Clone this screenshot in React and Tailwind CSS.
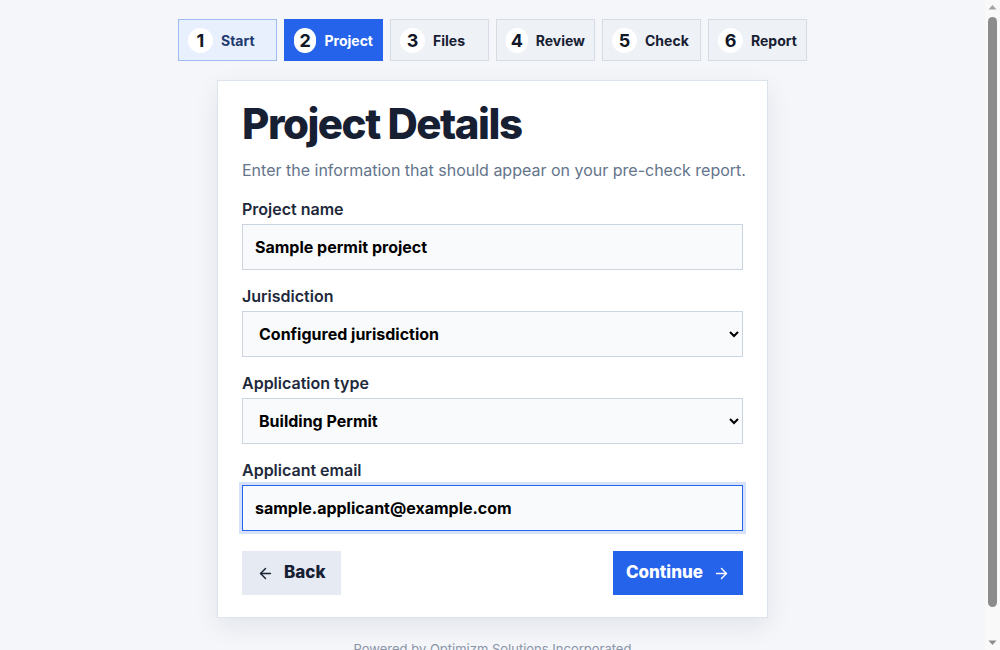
import { ArrowLeft, ArrowRight } from "lucide-react";

const steps = [
  { n: 1, label: "Start", state: "done" },
  { n: 2, label: "Project", state: "active" },
  { n: 3, label: "Files", state: "todo" },
  { n: 4, label: "Review", state: "todo" },
  { n: 5, label: "Check", state: "todo" },
  { n: 6, label: "Report", state: "todo" },
];

const stepStyles = {
  done: "bg-[#e8f0fe] border-[#9dbcf5] text-[#1e3a6e]",
  active: "bg-[#2563eb] border-[#2563eb] text-white",
  todo: "bg-[#eef1f6] border-[#d5dce6] text-[#172033]",
};

function Stepper() {
  return (
    <nav className="flex justify-center gap-[7px]">
      {steps.map((s) => (
        <div
          key={s.n}
          className={`flex items-center gap-[8px] w-[99px] h-[42px] px-[9px] border ${stepStyles[s.state]}`}
        >
          <span className="flex items-center justify-center w-[25px] h-[25px] rounded-full bg-white text-[#111827] text-[18px] font-bold">
            {s.n}
          </span>
          <span className="text-[14px] font-bold">{s.label}</span>
        </div>
      ))}
    </nav>
  );
}

function Label({ children }) {
  return (
    <label className="block mb-[5px] text-[16px] leading-[20px] font-semibold text-[#1e293b]">
      {children}
    </label>
  );
}

// classic page scrollbar on the right edge
function Scrollbar() {
  return (
    <div className="w-[15px] shrink-0 h-screen bg-[#f9f9f9] flex flex-col items-center">
      <svg width="15" height="15" viewBox="0 0 15 15" className="shrink-0">
        <path d="M3.5 9.5 L7.5 5 L11.5 9.5 Z" fill="#a3a3a3" />
      </svg>
      <div className="mt-[2px] w-[9px] h-[590px] rounded-full bg-[#8c8c8c]" />
      <div className="flex-1" />
      <svg width="15" height="15" viewBox="0 0 15 15" className="shrink-0">
        <path d="M3.5 5.5 L7.5 10 L11.5 5.5 Z" fill="#8c8c8c" />
      </svg>
    </div>
  );
}

const fieldBase =
  "w-full h-[46px] px-3 bg-[#f9fafb] border text-[16px] font-bold text-black outline-none";

export default function App() {
  return (
    <div
      className="flex h-screen overflow-hidden bg-[#f4f6fa]"
      style={{ fontFamily: "Inter, 'Noto Sans', sans-serif" }}
    >
      <div className="flex-1 pt-[19px] pb-[24px]">
        <Stepper />

        <main className="mt-[19px] mx-auto w-[551px] bg-white border border-[#dde3ea] shadow-[0_8px_24px_rgba(15,23,42,0.08)] px-6 pt-[17px] pb-[22px]">
          <h1 className="text-[42px] leading-[52px] font-extrabold tracking-[-0.035em] text-[#172033]">
            Project Details
          </h1>
          <p className="mt-[8px] text-[16px] leading-[24px] text-[#64748b] whitespace-nowrap">
            Enter the information that should appear on your pre-check report.
          </p>

          <form className="mt-[17px] flex flex-col gap-[16px]">
            <div>
              <Label>Project name</Label>
              <input
                className={`${fieldBase} border-[#cbd5e1]`}
                defaultValue="Sample permit project"
              />
            </div>
            <div>
              <Label>Jurisdiction</Label>
              <select className={`${fieldBase} border-[#cbd5e1]`} defaultValue="configured">
                <option value="configured">Configured jurisdiction</option>
              </select>
            </div>
            <div>
              <Label>Application type</Label>
              <select className={`${fieldBase} border-[#cbd5e1]`} defaultValue="building">
                <option value="building">Building Permit</option>
              </select>
            </div>
            <div>
              <Label>Applicant email</Label>
              <input
                type="email"
                className={`${fieldBase} border-[#2563eb] ring-[3px] ring-[#d6e2fb]`}
                defaultValue="sample.applicant@example.com"
              />
            </div>

            <div className="mt-[4px] flex justify-between">
              <button
                type="button"
                className="flex items-center gap-[10px] h-[44px] px-[15px] bg-[#e6eaf2] text-[#172033] text-[17px] font-extrabold"
              >
                <ArrowLeft size={17} strokeWidth={2} />
                Back
              </button>
              <button
                type="button"
                className="flex items-center gap-[10px] h-[44px] px-[13px] bg-[#2563eb] text-white text-[17px] font-extrabold"
              >
                Continue
                <ArrowRight size={17} strokeWidth={2} />
              </button>
            </div>
          </form>
        </main>

        <footer className="mt-[22px] text-center text-[13px] text-[#8a94a6]">
          Powered by Optimizm Solutions Incorporated
        </footer>
      </div>
      <Scrollbar />
    </div>
  );
}
